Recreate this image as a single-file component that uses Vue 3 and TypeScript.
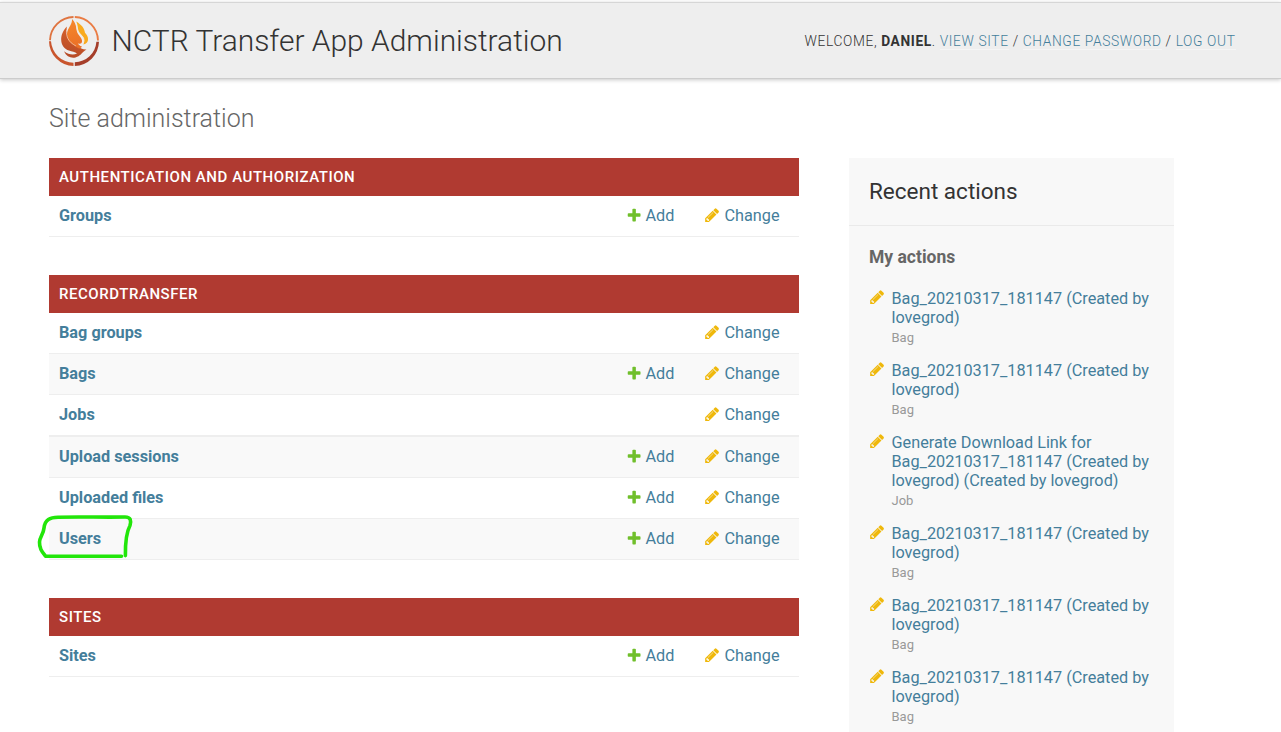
<script setup lang="ts">
interface Model {
  name: string
  add: boolean
}
interface AppModule {
  caption: string
  models: Model[]
}
interface Action {
  lines: string[]
  kind: string
}

const modules: AppModule[] = [
  { caption: 'Authentication and Authorization', models: [{ name: 'Groups', add: true }] },
  {
    caption: 'Recordtransfer',
    models: [
      { name: 'Bag groups', add: false },
      { name: 'Bags', add: true },
      { name: 'Jobs', add: false },
      { name: 'Upload sessions', add: true },
      { name: 'Uploaded files', add: true },
      { name: 'Users', add: true },
    ],
  },
  { caption: 'Sites', models: [{ name: 'Sites', add: true }] },
]

const bag: Action = { lines: ['Bag_20210317_181147 (Created by', 'lovegrod)'], kind: 'Bag' }
const actions: Action[] = [
  bag,
  bag,
  {
    lines: ['Generate Download Link for', 'Bag_20210317_181147 (Created by', 'lovegrod) (Created by lovegrod)'],
    kind: 'Job',
  },
  bag,
  bag,
  bag,
]

const plusPath =
  'M1600 796v192q0 40-28 68t-68 28h-416v416q0 40-28 68t-68 28h-192q-40 0-68-28t-28-68v-416h-416q-40 0-68-28t-28-68v-192q0-40 28-68t68-28h416v-416q0-40 28-68t68-28h192q40 0 68 28t28 68v416h416q40 0 68 28t28 68z'
const pencilPath =
  'M491 1536l91-91-235-235-91 91v107h128v128h107zm523-928q0-22-22-22-10 0-17 7l-542 542q-7 7-7 17 0 22 22 22 10 0 17-7l542-542q7-7 7-17zm-54-192l416 416-832 832h-416v-416zm683 96q0 53-37 90l-166 166-416-416 166-165q36-38 90-38 53 0 91 38l235 234q37 39 37 91z'
</script>

<template>
  <div class="page">
    <header class="header">
      <div class="branding">
        <svg class="logo" viewBox="0 0 50 50">
          <defs>
            <linearGradient id="body" x1="0.6" y1="0" x2="0.35" y2="1">
              <stop offset="0" stop-color="#d9632b" />
              <stop offset="1" stop-color="#b54a27" />
            </linearGradient>
            <linearGradient id="flame" x1="0.4" y1="0" x2="0.5" y2="1">
              <stop offset="0" stop-color="#f6892a" />
              <stop offset="1" stop-color="#ea6f27" />
            </linearGradient>
          </defs>
          <g fill="none" stroke-width="1.9">
            <path d="M1 24.2A24 24 0 0 1 24.5 1" stroke="#df7440" />
            <path d="M25.8 1A24 24 0 0 1 49 24.4" stroke="#ea7c44" />
          </g>
          <path d="M0 25.3H2A23 23 0 0 0 24.5 46.8V50A25 25 0 0 1 0 25.3Z" fill="#c9552d" />
          <path d="M50 25.8A25 25 0 0 1 25.8 50V46.2A22 22 0 0 0 47.4 25.8Z" fill="#a53e2a" />
          <path d="M17.8 10.5C13.5 15.5 12 19.5 12.2 24C12.4 29.5 15.5 33 20 34.6C23 35.7 26 35.8 28 37.6C24 39.2 19.5 38.6 15 35.2C17.5 40.6 22 42.4 26.5 41.4C31.5 40.4 32 37.2 37.5 33.6C33.5 33.8 31.5 32 28 30.6C21 27.5 16.4 22.5 17.8 10.5Z" fill="url(#body)" />
          <path d="M23 3C23.5 9 18.2 12 18 18C17.8 25 22.5 28 30 32.6C31.5 32.4 32.4 31.6 33 30.6C30.5 29.8 29.6 28.4 28.8 27.2C31.5 28.6 33.4 27 33 24.4C32.4 20.5 27.6 18.6 27.4 12.5C26.9 8.8 25.6 5.6 23 3Z" fill="url(#flame)" />
          <path d="M17.6 14C16.6 20.5 19.5 26 27 30" fill="none" stroke="#f3d5c4" stroke-width="0.6" />
          <path d="M27.2 5.5C33 9 35.4 12.5 36 16.8C39.6 20.2 41.2 26.8 34.4 28.6C36.6 23.6 34.4 20.8 31.6 18C28 14.5 29.6 10.4 27.2 5.5Z" fill="#f9ab1e" />
          <path d="M27.6 9.5C27.4 14.5 30 17 32.6 19.4C34.6 21.4 35.6 23.4 34.4 26.6" fill="none" stroke="#f6e6d6" stroke-width="0.8" />
        </svg>
        <h1 class="site-name">NCTR Transfer App Administration</h1>
      </div>
      <div class="user-tools">Welcome, <strong>Daniel</strong>. <a>View site</a> / <a>Change password</a> / <a>Log out</a></div>
    </header>

    <div class="content">
      <h1 class="title">Site administration</h1>
      <div class="columns">
        <main class="modules">
          <section v-for="m in modules" :key="m.caption" class="module">
            <h2 class="caption">{{ m.caption }}</h2>
            <div v-for="model in m.models" :key="model.name" class="row" :class="{ tall: model.name === 'Jobs' }">
              <a class="model">{{ model.name }}</a>
              <a v-if="model.add" class="link add">
                <svg class="icon" viewBox="0 0 1792 1792"><path fill="#70bf2b" :d="plusPath" /></svg>Add
              </a>
              <a class="link change">
                <svg class="icon" viewBox="0 0 1792 1792"><path fill="#efb80b" :d="pencilPath" /></svg>Change
              </a>
              <svg v-if="model.name === 'Users'" class="scribble" viewBox="0 0 106 50">
                <path d="M92.5 43.2H16.5C12.5 38 10.3 35 10.5 29C10.8 24 14.5 21 15 15C16 6.5 21 4.4 29 4.2C50 3.6 73 4.4 96 4C102 4 102.3 8 101 12.5C97.5 19 96.2 28 96.4 42.6" />
              </svg>
            </div>
          </section>
        </main>

        <aside class="sidebar">
          <h2 class="side-title">Recent actions</h2>
          <h3 class="side-sub">My actions</h3>
          <ul class="actions">
            <li v-for="(a, i) in actions" :key="i" class="action">
              <svg class="icon" viewBox="0 0 1792 1792"><path fill="#efb80b" :d="pencilPath" /></svg>
              <div class="action-text">
                <a v-for="line in a.lines" :key="line" class="action-line">{{ line }}</a>
                <span class="kind">{{ a.kind }}</span>
              </div>
            </li>
          </ul>
        </aside>
      </div>
    </div>
  </div>
</template>

<style>
body {
  margin: 0;
  background: #fff;
  overflow: hidden;
}
</style>

<style scoped>
.page {
  box-sizing: border-box;
  height: 732px;
  padding-top: 2px;
  overflow: hidden;
  font-family: Roboto, "Liberation Sans", sans-serif;
  font-size: 16.25px;
  color: #333;
}
h1, h2, h3, ul {
  margin: 0;
  padding: 0;
}
a {
  color: #447e9b;
}
.header {
  box-sizing: border-box;
  height: 77px;
  display: flex;
  align-items: center;
  justify-content: space-between;
  padding: 1px 45.5px 0 49px;
  background: #eee;
  border-top: 1px solid #d6d6d6;
  border-bottom: 1px solid #ccc;
  box-shadow: 0 1px 4px rgba(0, 0, 0, 0.22);
}
.branding {
  display: flex;
  align-items: center;
  gap: 12.5px;
}
.logo {
  width: 50px;
  height: 50px;
}
.site-name {
  font-size: 29.95px;
  font-weight: 300;
  line-height: 40px;
  white-space: nowrap;
}
.user-tools {
  font-size: 13.75px;
  font-weight: 300;
  letter-spacing: 0.625px;
  line-height: 18px;
  text-transform: uppercase;
  white-space: nowrap;
}
.user-tools strong {
  font-weight: 700;
}
.user-tools a {
  border-bottom: 1px solid #f5f5f5;
}
.content {
  padding: 24px 0 0 49px;
}
.title {
  height: 55px;
  font-size: 25px;
  font-weight: 300;
  line-height: 31px;
  color: #666;
}
.columns {
  display: flex;
  align-items: flex-start;
  gap: 50px;
}
.modules {
  width: 750px;
  display: flex;
  flex-direction: column;
  gap: 38px;
}
.caption {
  height: 38px;
  padding-left: 10px;
  background: #b03a31;
  color: #fff;
  font-size: 15px;
  font-weight: 500;
  letter-spacing: 0.55px;
  line-height: 38px;
  text-transform: uppercase;
}
.row {
  position: relative;
  box-sizing: border-box;
  height: 41px;
  display: grid;
  grid-template-columns: 567px 78px 1fr;
  align-items: center;
  padding-left: 10px;
  border-bottom: 1px solid #eee;
  line-height: 20px;
}
.row:nth-of-type(even) {
  background: #f9f9f9;
}
.row.tall {
  height: 42px;
  border-bottom-width: 2px;
}
.model {
  font-weight: 700;
}
.link {
  display: flex;
  align-items: center;
  gap: 3.25px;
}
.link .icon {
  margin-bottom: 2px;
}
.change {
  grid-column: 3;
  gap: 4.25px;
}
.icon {
  flex: none;
  width: 16.25px;
  height: 16.25px;
}
.scribble {
  position: absolute;
  left: -20px;
  top: -6px;
  width: 106px;
  height: 50px;
  fill: none;
  stroke: #22e60a;
  stroke-width: 3.6;
  stroke-linecap: round;
  stroke-linejoin: round;
}
.sidebar {
  width: 325px;
  min-height: 600px;
  background: #f8f8f8;
}
.side-title {
  height: 67px;
  padding-left: 20px;
  border-bottom: 1px solid #eaeaea;
  font-size: 22.5px;
  font-weight: 400;
  line-height: 66px;
}
.side-sub {
  padding: 20px 20px 0;
  font-size: 17.5px;
  line-height: 22px;
  color: #666;
}
.actions {
  padding: 21px 0 0 20px;
  list-style: none;
}
.action {
  display: flex;
  gap: 6.25px;
  padding-bottom: 14px;
}
.action-text {
  display: flex;
  flex-direction: column;
}
.action-line {
  line-height: 19px;
  white-space: nowrap;
}
.kind {
  margin-top: 2px;
  font-size: 13px;
  line-height: 18px;
  color: #999;
}
</style>
